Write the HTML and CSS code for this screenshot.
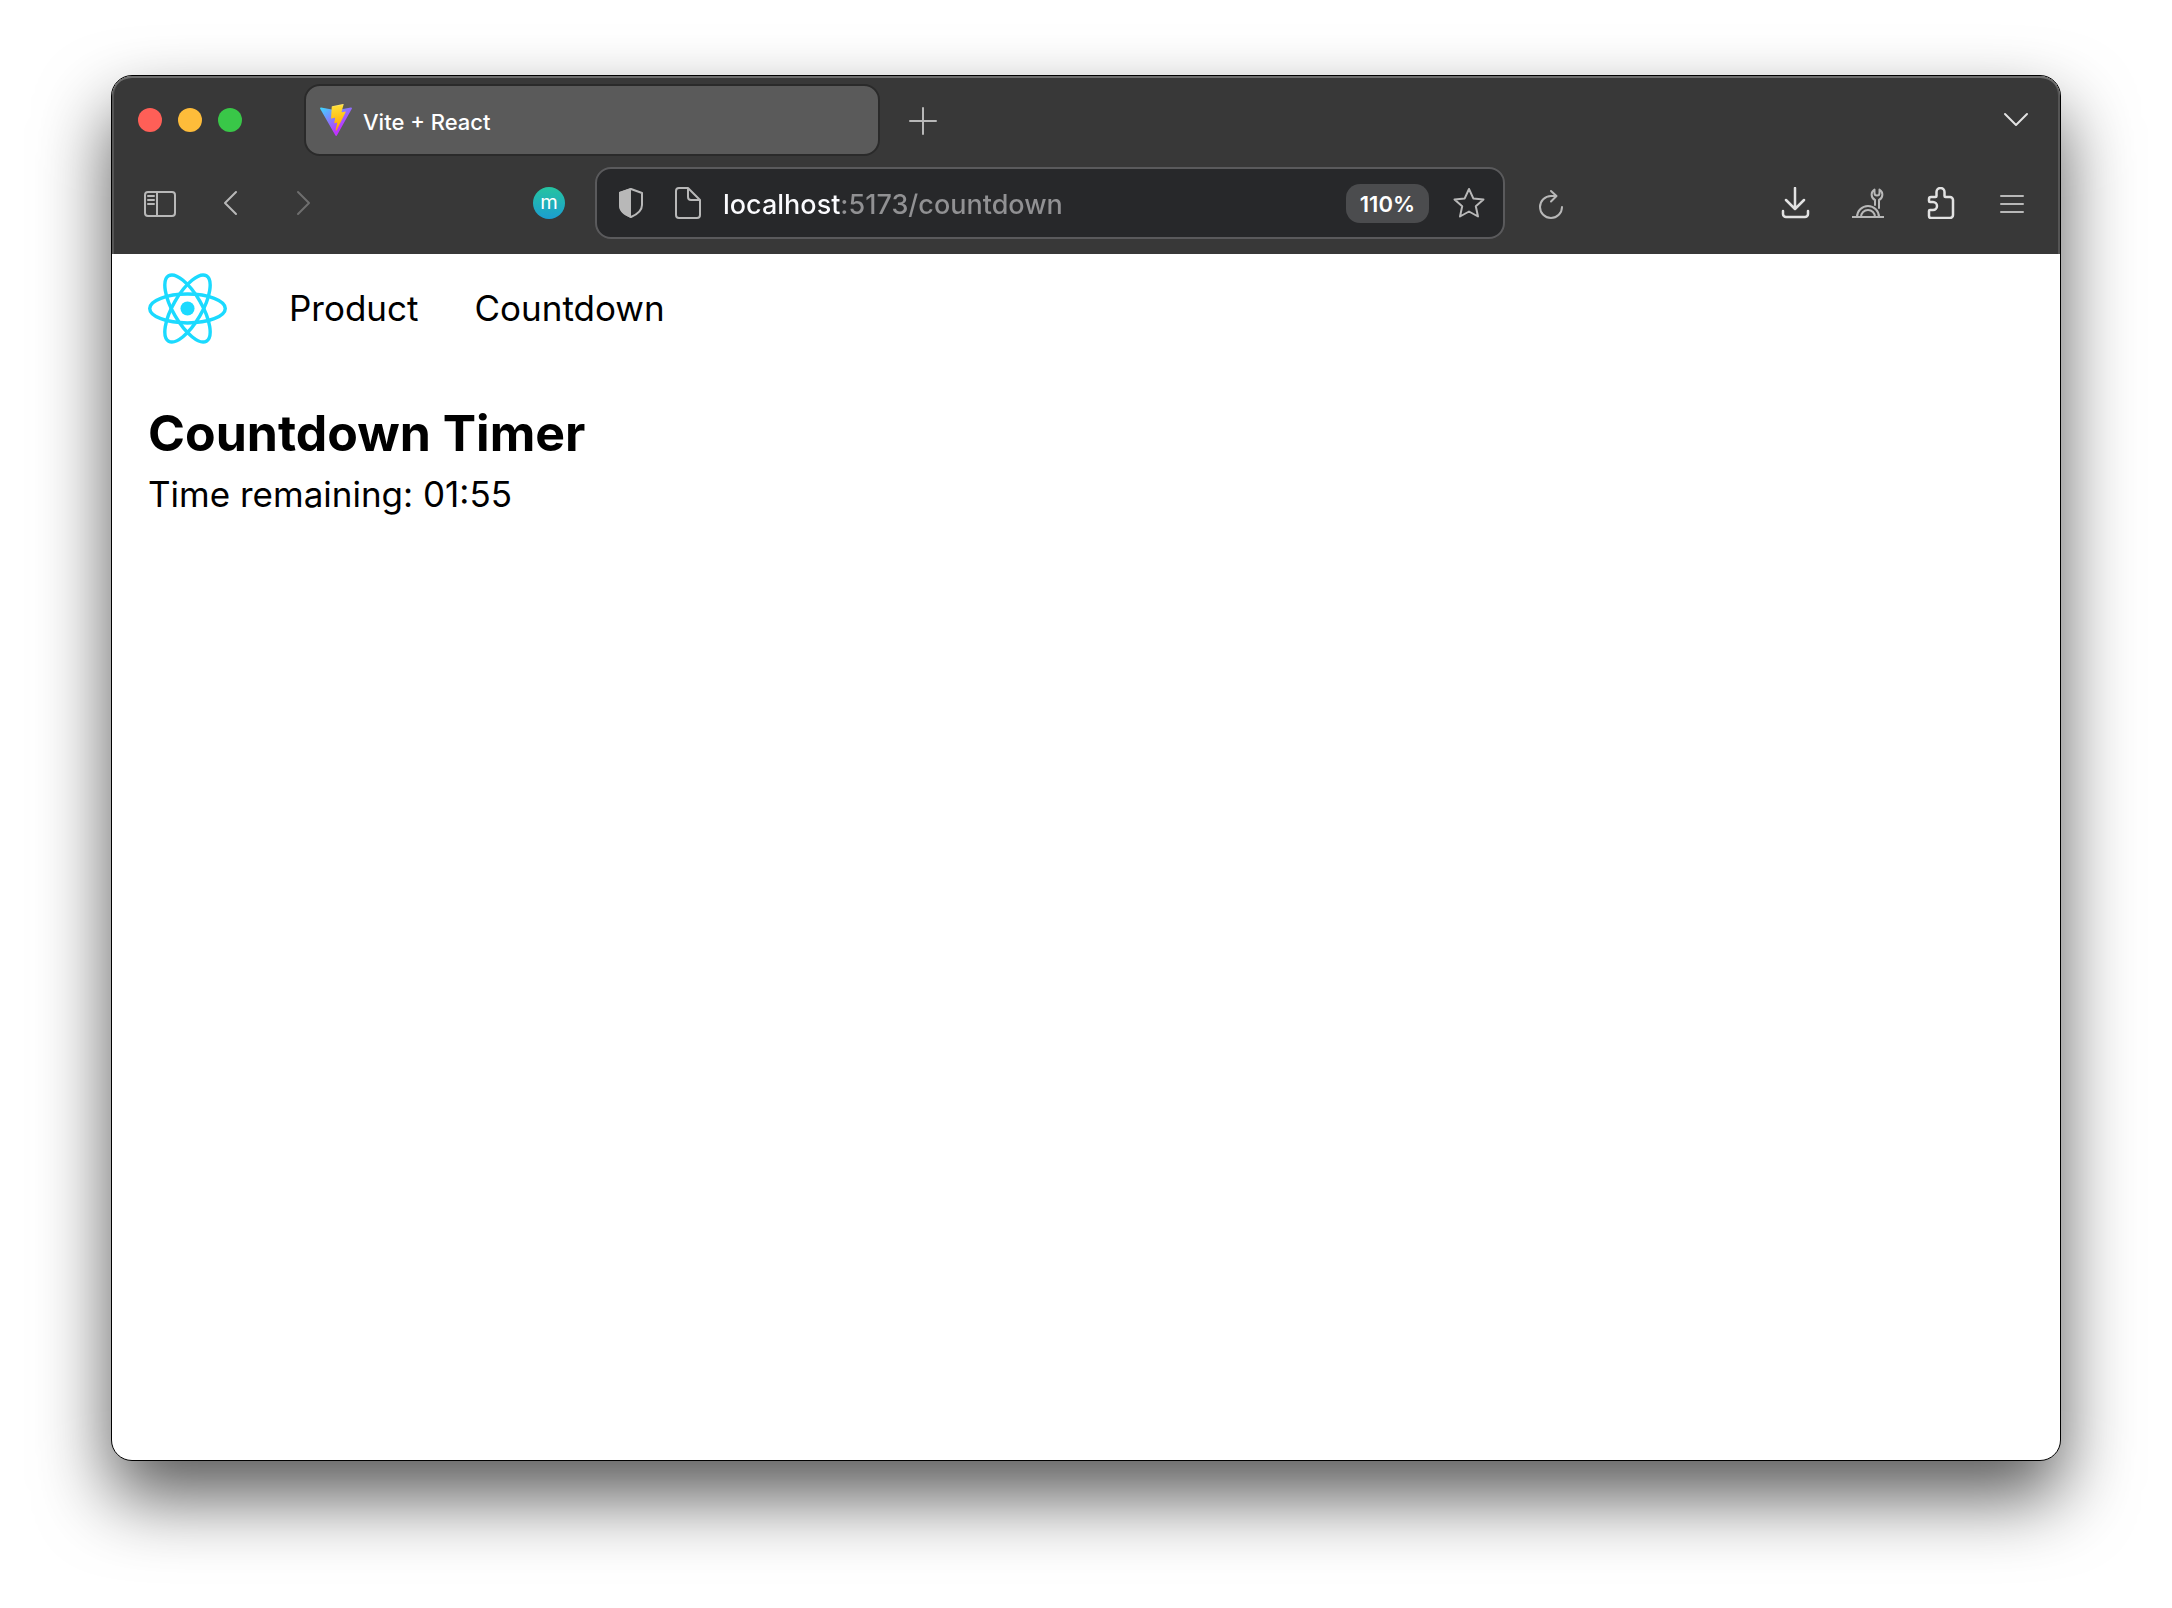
FILE: index.html
```html
<!DOCTYPE html>
<html lang="en">
<head>
<meta charset="utf-8">
<meta name="viewport" content="width=device-width, initial-scale=1">
<title>Vite + React</title>
<link rel="stylesheet" href="styles.css">
</head>
<body>
<div class="window">
  <div class="chrome">
    <div class="tab-strip">
      <div class="lights">
        <button class="light light-close" aria-label="Close"></button>
        <button class="light light-minimize" aria-label="Minimize"></button>
        <button class="light light-zoom" aria-label="Zoom"></button>
      </div>
      <button class="tab">
        <svg class="icon" viewBox="0 0 256 257" aria-hidden="true">
          <defs>
            <linearGradient id="vite-body" x1="-.828%" x2="57.636%" y1="7.652%" y2="78.411%"><stop offset="0%" stop-color="#41D1FF"/><stop offset="100%" stop-color="#BD34FE"/></linearGradient>
            <linearGradient id="vite-bolt" x1="43.376%" x2="50.316%" y1="2.242%" y2="89.03%"><stop offset="0%" stop-color="#FFEA83"/><stop offset="8.333%" stop-color="#FFDD35"/><stop offset="100%" stop-color="#FFA800"/></linearGradient>
          </defs>
          <path fill="url(#vite-body)" d="M255.153 37.938L134.897 252.976c-2.483 4.44-8.862 4.466-11.382.048L.875 37.958c-2.746-4.814 1.371-10.646 6.827-9.67l120.385 21.517a6.537 6.537 0 0 0 2.322-.004l117.867-21.483c5.438-.991 9.574 4.796 6.877 9.62Z"/>
          <path fill="url(#vite-bolt)" d="M185.432.063L96.44 17.501a3.268 3.268 0 0 0-2.634 3.014l-5.474 92.456a3.268 3.268 0 0 0 3.997 3.378l24.777-5.718c2.318-.535 4.413 1.507 3.936 3.838l-7.361 36.047c-.495 2.426 1.782 4.5 4.151 3.78l15.304-4.649c2.372-.72 4.652 1.36 4.15 3.788l-11.698 56.621c-.732 3.542 3.979 5.473 5.943 2.437l1.313-2.028l72.516-144.72c1.215-2.423-.88-5.186-3.54-4.672l-25.505 4.922c-2.396.462-4.435-1.77-3.759-4.114l16.646-57.705c.677-2.35-1.37-4.583-3.769-4.113Z"/>
        </svg>
        <span class="tab-title">Vite + React</span>
      </button>
      <button class="tool new-tab" aria-label="New tab">
        <svg class="icon" viewBox="0 0 32 32"><path d="M16 4v26M3 17h26"/></svg>
      </button>
      <button class="tool bright all-tabs" aria-label="List all tabs">
        <svg class="icon" viewBox="0 0 32 32"><path d="M5 10l11 11 11-11"/></svg>
      </button>
    </div>

    <div class="toolbar">
      <button class="tool" aria-label="Sidebar">
        <svg class="icon" viewBox="0 0 32 32"><rect x="1" y="5" width="30" height="24" rx="3"/><path d="M13 5v24M4 9h6M4 13h6M4 17h6"/></svg>
      </button>
      <button class="tool" aria-label="Back">
        <svg class="icon" viewBox="0 0 32 32"><path d="M20 5L9 16l11 11"/></svg>
      </button>
      <button class="tool" aria-label="Forward" disabled>
        <svg class="icon" viewBox="0 0 32 32"><path d="M10 5l11 11-11 11"/></svg>
      </button>
      <span class="spring"></span>
      <button class="tool" aria-label="Extension"><span class="badge">m</span></button>
      <div class="address">
        <div class="address-group">
          <button class="address-icon" aria-label="Tracking protection">
            <svg class="icon" viewBox="0 0 32 32"><path d="M16 2L27 6v12c0 5-4 9-11 12C9 27 5 23 5 18V6z"/><path class="solid" d="M16 1v30C8 28 4 24 4 18V5z"/></svg>
          </button>
          <button class="address-icon" aria-label="Site information">
            <svg class="icon" viewBox="0 0 32 32"><path d="M8 1h9l12 12v15a3 3 0 0 1-3 3H8a3 3 0 0 1-3-3V4a3 3 0 0 1 3-3zM17 1v9a3 3 0 0 0 3 3h9"/></svg>
          </button>
        </div>
        <input class="url" type="text" value="localhost:5173/countdown" aria-label="Address">
        <div class="address-group">
          <button class="zoom-level">110%</button>
          <button class="address-icon" aria-label="Bookmark">
            <svg class="icon" viewBox="0 0 32 32"><path d="M16 2l4.300 9.400 10.200 1.100-7.700 6.800 2.200 10.200L16 24.500 7 29.500l2.200-10.200-7.700-6.800 10.200-1.100z"/></svg>
          </button>
        </div>
      </div>
      <button class="tool" aria-label="Reload">
        <svg class="icon" viewBox="0 0 32 32"><path d="M27 20a11 11 0 1 1-11-11h5M16 4l5.500 5-5.500 5.500"/></svg>
      </button>
      <span class="spring"></span>
      <button class="tool bright" aria-label="Downloads">
        <svg class="icon heavy" viewBox="0 0 32 32"><path d="M15 1v20M6 13l9 9 9-9M3 24v3a3 3 0 0 0 3 3h19a3 3 0 0 0 3-3v-3"/></svg>
      </button>
      <button class="tool" aria-label="Developer tools">
        <svg class="icon" viewBox="0 0 32 32"><path d="M0 30h32M5 30a11 11 0 0 1 22 0M9 30a7 7 0 0 1 14 0M23 18v-5a6 6 0 0 1-.500-10.500V6a2.500 2.500 0 0 0 5 0V2.500A6 6 0 0 1 27 13v8"/></svg>
      </button>
      <button class="tool bright" aria-label="Extensions">
        <svg class="icon heavy" viewBox="-1 0 32 32"><path d="M6 10h4.500a1 1 0 0 0 1-1V5a4 4 0 0 1 8 0v4a1 1 0 0 0 1 1H25a3 3 0 0 1 3 3v15a3 3 0 0 1-3 3H6a2 2 0 0 1-2-2v-5a1 1 0 0 1 1-1h3a4 4 0 0 0 0-8H5a1 1 0 0 1-1-1v-2a2 2 0 0 1 2-2z"/></svg>
      </button>
      <button class="tool" aria-label="Menu">
        <svg class="icon" viewBox="0 0 32 32"><path d="M5 9h22M5 17h22M5 25h22"/></svg>
      </button>
    </div>
  </div>

  <div class="page">
    <nav class="nav">
      <svg class="logo" viewBox="-11.500 -10.232 23 20.463" role="img" aria-label="React">
        <circle r="2.050"/>
        <g fill="none" stroke="#1bdaff"><ellipse rx="11" ry="4.200"/><ellipse rx="11" ry="4.200" transform="rotate(60)"/><ellipse rx="11" ry="4.200" transform="rotate(120)"/></g>
      </svg>
      <div class="links">
        <a class="link" href="/product">Product</a>
        <a class="link" href="/countdown">Countdown</a>
      </div>
    </nav>
    <main class="main">
      <h1 class="heading">Countdown Timer</h1>
      <p class="remaining">Time remaining: 01:55</p>
    </main>
  </div>
</div>
</body>
</html>
```
FILE: styles.css
```css
* {
  box-sizing: border-box;
}

body {
  margin: 0;
  min-height: 100vh;
  display: flex;
  padding: 75px 111px 147px;
  background: #fff;
  font-family: Inter, "Liberation Sans", sans-serif;
  color: #000;
}

button {
  margin: 0;
  padding: 0;
  border: 0;
  background: none;
  font: inherit;
  color: inherit;
}

.window {
  flex: 1;
  min-width: 0;
  display: flex;
  flex-direction: column;
  border: 1px solid #000;
  border-radius: 21px;
  overflow: hidden;
  background: #fff;
  box-shadow: 0 36px 72px rgba(0, 0, 0, 0.65);
}

.chrome {
  background: #383838;
  border-radius: 20px 20px 0 0;
  box-shadow: inset 0 2px #6e6e6e, inset 2px 0 #555, inset -2px 0 #555;
}

.tab-strip {
  display: flex;
  align-items: center;
  height: 88px;
  padding: 0 8px 0 26px;
}

.lights {
  display: flex;
  gap: 16px;
  margin-right: 62px;
}

.light {
  width: 24px;
  height: 24px;
  border-radius: 50%;
}

.light-close {
  background: #ff5f57;
}

.light-minimize {
  background: #febc3a;
}

.light-zoom {
  background: #39c748;
}

.tab {
  flex: 0 1 576px;
  display: flex;
  align-items: center;
  gap: 11px;
  height: 72px;
  padding: 0 14px;
  border: 2px solid #2a2a2a;
  border-radius: 16px;
  background: #5a5a5a;
  color: #fff;
  font-size: 22px;
  font-weight: 500;
}

.tab-title {
  padding-top: 3px;
}

.icon {
  flex: none;
  display: block;
  width: 32px;
  height: 32px;
}

.tool .icon,
.address .icon {
  fill: none;
  stroke: currentColor;
  stroke-width: 2;
  stroke-linecap: round;
  stroke-linejoin: round;
}

.tool .heavy {
  stroke-width: 2.5;
}

.address .solid {
  fill: currentColor;
  stroke: none;
}

.tool {
  flex: none;
  display: flex;
  align-items: center;
  justify-content: center;
  width: 72px;
  height: 72px;
  color: #b8b8b8;
}

.tool:disabled {
  color: #6e6e6e;
}

.bright {
  color: #e2e2e2;
}

.new-tab {
  margin-left: 7px;
}

.all-tabs {
  margin-left: auto;
}

.toolbar {
  display: flex;
  align-items: center;
  padding: 3px 12px 15px;
}

.spring {
  flex: 1;
}

.badge {
  width: 32px;
  height: 32px;
  border-radius: 50%;
  background: linear-gradient(#25c4a0, #1b9dd0);
  color: #fff;
  font-size: 20px;
  line-height: 30px;
  text-align: center;
}

.address {
  flex: 0 1 910px;
  min-width: 0;
  display: flex;
  align-items: center;
  gap: 20px;
  height: 72px;
  margin: 0 10px;
  padding: 0 18px;
  border: 2px solid #5a5a5c;
  border-radius: 16px;
  background: #27282a;
}

.address-group {
  flex: none;
  display: flex;
  align-items: center;
  gap: 24px;
}

.address-icon {
  flex: none;
  color: #b8b8b8;
}

.url {
  flex: 1;
  min-width: 0;
  padding: 3px 0 0;
  border: 0;
  outline: 0;
  font: 500 27px/40px Inter, "Liberation Sans", sans-serif;
  color: #fff;
  background: linear-gradient(90deg, #fbfbfe 119px, #919193 119px);
  -webkit-background-clip: text;
  background-clip: text;
  -webkit-text-fill-color: transparent;
}

.zoom-level {
  flex: none;
  height: 39px;
  padding: 2px 14px 0;
  border-radius: 14px;
  background: #4b4c4e;
  color: #fff;
  font-size: 22px;
  font-weight: 600;
}

.page {
  flex: 1;
}

.nav {
  display: flex;
  align-items: center;
  gap: 62px;
  min-height: 108px;
  padding: 0 36px;
}

.logo {
  flex: none;
  width: 79px;
  height: 71px;
  fill: #1bdaff;
}

.links {
  display: flex;
  gap: 56px;
}

.link {
  color: #000;
  font-size: 35px;
  line-height: 53px;
  text-decoration: none;
}

.main {
  padding: 36px;
}

.heading {
  margin: 0;
  font-size: 50px;
  font-weight: 700;
  line-height: 70px;
}

.remaining {
  margin: 0;
  font-size: 35px;
  line-height: 53px;
}
```
